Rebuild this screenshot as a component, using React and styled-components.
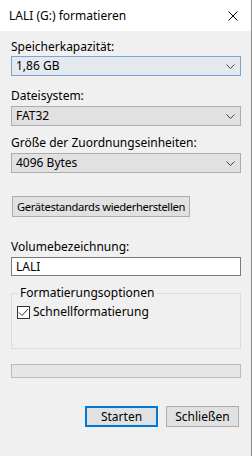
import React from 'react';
import styled, { createGlobalStyle } from 'styled-components';

const GlobalStyle = createGlobalStyle`
  html, body {
    margin: 0;
    padding: 0;
    background: #f0f0f0;
  }
  * {
    box-sizing: border-box;
  }
`;

const Window = styled.div`
  width: 252px;
  height: 456px;
  background: #f0f0f0;
  border-right: 1px solid #8c8c8c;
  font-family: "Noto Sans", "Open Sans", sans-serif;
  font-size: 12px;
  color: #000;
  display: flex;
  flex-direction: column;
`;

const TitleBar = styled.div`
  height: 31px;
  background: #fff;
  display: flex;
  align-items: center;
  justify-content: space-between;
  padding: 0 13px 0 9px;
  flex-shrink: 0;
`;

const Title = styled.span`
  font-size: 12px;
  line-height: 16px;
`;

const Body = styled.div`
  padding: 8px 10px 0 11px;
  display: flex;
  flex-direction: column;
`;

const Label = styled.div`
  line-height: 16px;
  height: 16px;
  margin-top: ${p => p.$mt || 0}px;
  margin-bottom: ${p => p.$mb || 1}px;
  white-space: nowrap;
`;

const Select = styled.div`
  height: 20px;
  width: 230px;
  border: 1px solid ${p => (p.$focus ? '#7ea3cf' : '#adadad')};
  background: ${p => (p.$focus ? '#e4e9ef' : '#e1e1e1')};
  display: flex;
  align-items: center;
  justify-content: space-between;
  padding: 0 5px 0 4px;
  line-height: 16px;
`;

const Chevron = () => (
  <svg width="9" height="5" viewBox="0 0 9 5">
    <path d="M0.5 0.5 L4.5 4.5 L8.5 0.5" fill="none" stroke="#444" strokeWidth="1" />
  </svg>
);

const Button = styled.button`
  font-family: inherit;
  font-size: ${p => (p.$tight ? '11.2px' : '12px')};
  letter-spacing: ${p => (p.$tight ? '-0.35px' : 'normal')};
  color: #000;
  height: ${p => p.$h || 21}px;
  width: ${p => p.$w}px;
  margin-left: ${p => p.$ml || 0}px;
  background: #e1e1e1;
  border: ${p => (p.$primary ? '2px solid #0078d7' : '1px solid #adadad')};
  padding: 0;
  line-height: 16px;
  white-space: nowrap;
  display: flex;
  align-items: center;
  justify-content: center;
`;

const TextInput = styled.div`
  height: 19px;
  width: 230px;
  background: #fff;
  border: 1px solid #7a7a7a;
  padding: 0 4px;
  display: flex;
  align-items: center;
  line-height: 16px;
`;

const Group = styled.fieldset`
  margin: 9px 0 0 0;
  padding: 0 0 0 5px;
  width: 230px;
  height: 64px;
  border: 1px solid #dcdcdc;
  display: block;
`;

const Legend = styled.legend`
  padding: 0 2px;
  margin-left: 1px;
  line-height: 16px;
`;

const CheckRow = styled.label`
  display: flex;
  align-items: center;
  gap: 3px;
  margin-top: 3px;
  line-height: 16px;
`;

const CheckBox = styled.span`
  width: 13px;
  height: 13px;
  border: 1px solid #333;
  background: #fff;
  display: flex;
  align-items: center;
  justify-content: center;
`;

const Progress = styled.div`
  margin-top: 15px;
  width: 230px;
  height: 14px;
  background: #e6e6e6;
  border: 1px solid #bcbcbc;
`;

const Footer = styled.div`
  display: flex;
  justify-content: flex-end;
  gap: 8px;
  margin-top: 28px;
  padding-right: 2px;
`;

const Spacer = styled.div`
  height: ${p => p.$h}px;
`;

const CloseIcon = () => (
  <svg width="10" height="10" viewBox="0 0 10 10">
    <path d="M0.5 0.5 L9.5 9.5 M9.5 0.5 L0.5 9.5" stroke="#000" strokeWidth="1" fill="none" />
  </svg>
);

export default function App() {
  return (
    <>
      <GlobalStyle />
      <Window>
        <TitleBar>
          <Title>LALI (G:) formatieren</Title>
          <CloseIcon />
        </TitleBar>
        <Body>
          <Label>Speicherkapazität:</Label>
          <Select $focus>
            <span>1,86 GB</span>
            <Chevron />
          </Select>
          <Label $mt={12} $mb={2}>Dateisystem:</Label>
          <Select>
            <span>FAT32</span>
            <Chevron />
          </Select>
          <Label $mt={9} $mb={2}>Größe der Zuordnungseinheiten:</Label>
          <Select>
            <span>4096 Bytes</span>
            <Chevron />
          </Select>
          <Spacer $h={23} />
          <Button $w={178} $ml={1} $tight>Gerätestandards wiederherstellen</Button>
          <Label $mt={22} $mb={2}>Volumebezeichnung:</Label>
          <TextInput>LALI</TextInput>
          <Group>
            <Legend>Formatierungsoptionen</Legend>
            <CheckRow>
              <CheckBox>
                <svg width="11" height="11" viewBox="0 0 11 11">
                  <path d="M1 5.5 L4 8.5 L10 2" fill="none" stroke="#333" strokeWidth="1" />
                </svg>
              </CheckBox>
              Schnellformatierung
            </CheckRow>
          </Group>
          <Progress />
          <Footer>
            <Button $primary $w={73}>Starten</Button>
            <Button $w={73}>Schließen</Button>
          </Footer>
        </Body>
      </Window>
    </>
  );
}
